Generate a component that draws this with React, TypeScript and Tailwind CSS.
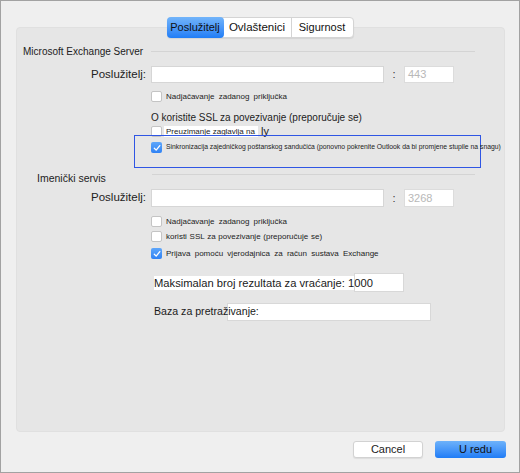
import React from "react";

const F = { fontFamily: '"Liberation Sans", Arial, sans-serif' };

function Box({ checked = false }: { checked?: boolean }) {
  return checked ? (
    <div className="w-[11px] h-[11px] rounded-[2px] bg-gradient-to-b from-[#5ea6fa] to-[#2f82f4] flex items-center justify-center shrink-0">
      <svg width="8" height="8" viewBox="0 0 8 8">
        <path d="M1.3 4.2 L3.2 6.1 L6.8 1.6" stroke="white" strokeWidth="1.3" fill="none" strokeLinecap="round" strokeLinejoin="round" />
      </svg>
    </div>
  ) : (
    <div className="w-[11px] h-[11px] rounded-[2px] bg-white border border-[#c4c4c4] shrink-0" />
  );
}

function CheckRow({ label, checked, className = "", spacing = "[word-spacing:1.5px]" }: { label: string; checked?: boolean; className?: string; spacing?: string }) {
  return (
    <div className={`flex items-center h-[11px] pl-[134px] ${className}`}>
      <Box checked={checked} />
      <span className={`ml-[4px] text-[8px] text-[#222] leading-none whitespace-nowrap ${spacing}`}>{label}</span>
    </div>
  );
}

function ServerRow({ port, className = "" }: { port: string; className?: string }) {
  return (
    <div className={`flex items-center ${className}`}>
      <div className="w-[129px] text-right text-[11.5px] text-[#222]">Poslužitelj:</div>
      <div className="ml-[5px] w-[233px] h-full bg-white border border-[#d6d6d6]" />
      <div className="w-[20px] text-center text-[11px] text-[#333]">:</div>
      <div className="w-[50px] h-full bg-white border border-[#dcdcdc] text-[11px] text-[#b8b8b8] pl-[3px] flex items-center">{port}</div>
    </div>
  );
}

export default function App() {
  return (
    <div style={F} className="w-[520px] h-[473px] bg-[#efefef] border border-[#a2a2a2] flex flex-col">
      <div className="relative z-10 mt-[16px] h-[21px] flex justify-center">
        <div className="flex h-[21px] bg-white border border-[#d4d4d4] rounded-[4px] shadow-[0_1px_1px_rgba(0,0,0,0.08)]">
          <div className="w-[57px] -ml-px -my-px rounded-[4px] bg-gradient-to-b from-[#72b4fa] to-[#1f7df6] flex items-center justify-center text-[11px] text-[#111]">
            Poslužitelj
          </div>
          <div className="w-[68px] flex items-center justify-center text-[11.5px] text-[#111] border-r border-[#d4d4d4]">
            Ovlaštenici
          </div>
          <div className="w-[61px] flex items-center justify-center text-[11px] text-[#111]">Sigurnost</div>
        </div>
      </div>
      <div className="-mt-[11px] ml-[15px] mr-[14px] h-[405px] bg-[#e6e6e6] border border-[#e0e0e0] rounded-[4px] flex flex-col">
        <div className="mt-[16px] h-[14px] flex items-center">
          <span className="ml-[6px] text-[10px] text-[#222] whitespace-nowrap">Microsoft Exchange Server</span>
          <div className="ml-[8px] mr-[29px] flex-1 h-px bg-[#d4d4d4]" />
        </div>
        <ServerRow port="443" className="mt-[8px] h-[17px]" />
        <CheckRow label="Nadjačavanje zadanog priključka" className="mt-[8px]" spacing="[word-spacing:2px]" />
        <div className="mt-[8px] h-[14px] pl-[134px] flex items-center text-[10px] text-[#222] whitespace-nowrap">
          O koristite SSL za povezivanje (preporučuje se)
        </div>
        <div className="mt-[2px] flex items-center h-[11px] pl-[134px]">
          <Box />
          <span className="ml-[2px] pl-[2px] pr-[3px] bg-white text-[8px] text-[#222] leading-[11px] whitespace-nowrap">Preuzimanje zaglavlja na</span>
          <span className="ml-[3px] text-[11px] text-[#222]">ly</span>
        </div>
        <div className="-mt-[2px] ml-[117px] w-[347px] h-[33px] border-[1.5px] border-[#2f56e4] flex items-start pt-[6px] pl-[16px]">
          <Box checked />
          <span className="ml-[4px] text-[6.8px] text-[#222] leading-[9px] whitespace-nowrap">
            Sinkronizacija zajedničkog poštanskog sandučića (ponovno pokrenite Outlook da bi promjene stupile na snagu)
          </span>
        </div>
        <div className="mt-[3px] flex items-start h-[14px]">
          <span className="ml-[20px] leading-[14px] text-[10.5px] text-[#222] whitespace-nowrap">Imenički servis</span>
          <div className="ml-[46px] mt-[3px] mr-[29px] flex-1 h-px bg-[#d4d4d4]" />
        </div>
        <ServerRow port="3268" className="mt-[4px] h-[18px]" />
        <CheckRow label="Nadjačavanje zadanog priključka" className="mt-[9px]" spacing="[word-spacing:2px]" />
        <CheckRow label="koristi SSL za povezivanje (preporučuje se)" className="mt-[4px]" spacing="[word-spacing:0.5px]" />
        <CheckRow label="Prijava pomoću vjerodajnica za račun sustava Exchange" checked className="mt-[6px]" spacing="[word-spacing:2px]" />
        <div className="mt-[14px] pl-[137px] flex items-center h-[19px]">
          <span className="w-[200px] shrink-0 bg-white text-[11.2px] text-[#1a1a1a] leading-[14px] whitespace-nowrap relative z-10">Maksimalan broj rezultata za vraćanje: 1000</span>
          <div className="w-[50px] h-[19px] bg-white border border-[#d8d8d8]" />
        </div>
        <div className="mt-[11px] pl-[137px] flex items-center h-[18px]">
          <span className="w-[73px] shrink-0 text-[10.6px] text-[#1a1a1a] whitespace-nowrap relative z-10">Baza za pretraživanje:</span>
          <div className="w-[204px] h-[18px] bg-white border border-[#d8d8d8]" />
        </div>
      </div>
      <div className="mt-[9px] flex justify-end pr-[13px] gap-[12px]">
        <button className="w-[70px] h-[17px] bg-white border border-[#d2d2d2] rounded-[3px] text-[11px] text-[#222] flex items-center justify-center shadow-[0_1px_1px_rgba(0,0,0,0.08)]">
          Cancel
        </button>
        <button className="w-[71px] h-[17px] rounded-[3px] bg-gradient-to-b from-[#6db2fa] to-[#1e7cf6] text-[11px] text-[#111] flex items-center justify-center pl-[10px]">
          U redu
        </button>
      </div>
    </div>
  );
}
